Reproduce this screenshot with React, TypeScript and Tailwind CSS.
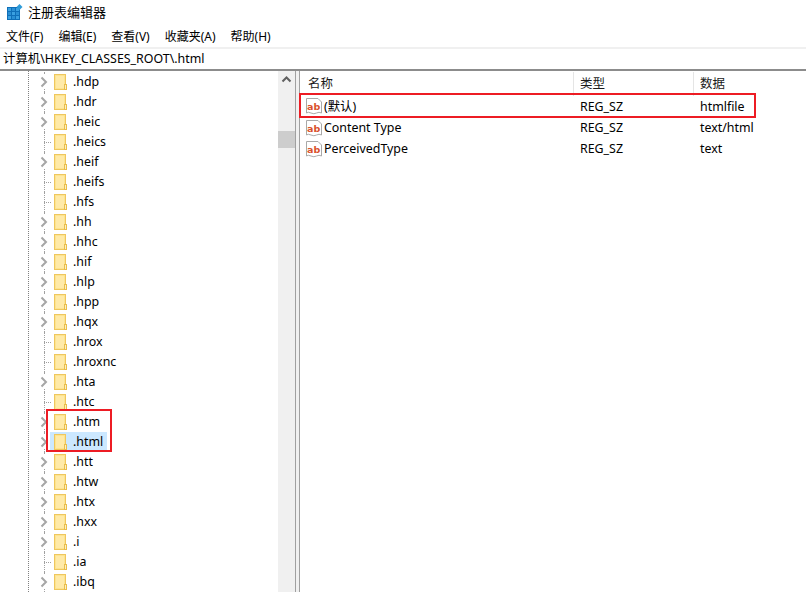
import React from 'react';

const keys: [string, boolean][] = [
  ['.hdp', true], ['.hdr', true], ['.heic', true], ['.heics', false], ['.heif', true],
  ['.heifs', false], ['.hfs', false], ['.hh', true], ['.hhc', true], ['.hif', true],
  ['.hlp', true], ['.hpp', true], ['.hqx', true], ['.hrox', false], ['.hroxnc', false],
  ['.hta', true], ['.htc', false], ['.htm', true], ['.html', true], ['.htt', true],
  ['.htw', true], ['.htx', true], ['.hxx', true], ['.i', true], ['.ia', false], ['.ibq', true],
];

const values = [
  { name: '(默认)', type: 'REG_SZ', data: 'htmlfile', h: 'h-[22px]' },
  { name: 'Content Type', type: 'REG_SZ', data: 'text/html', h: 'h-[21px]' },
  { name: 'PerceivedType', type: 'REG_SZ', data: 'text', h: 'h-[21px]' },
];

const menus = ['文件(F)', '编辑(E)', '查看(V)', '收藏夹(A)', '帮助(H)'];

function AppIcon() {
  return (
    <svg width="18" height="18" viewBox="0 0 18 18" className="shrink-0">
      <rect x="0" y="3" width="13" height="13" fill="#0f6fb8" />
      <rect x="1" y="4" width="3" height="3" fill="#3aa0e0" />
      <rect x="5" y="4" width="3" height="3" fill="#2a8fd4" />
      <rect x="9" y="4" width="3" height="3" fill="#3aa0e0" />
      <rect x="1" y="8" width="3" height="3" fill="#2a8fd4" />
      <rect x="5" y="8" width="3" height="3" fill="#3aa0e0" />
      <rect x="9" y="8" width="3" height="3" fill="#2a8fd4" />
      <rect x="1" y="12" width="3" height="3" fill="#3aa0e0" />
      <rect x="5" y="12" width="3" height="3" fill="#2a8fd4" />
      <rect x="9" y="12" width="3" height="3" fill="#3aa0e0" />
      <path d="M12.5 0 L15.5 3 L12.5 6 L9.5 3 Z" fill="#2f9bd8" />
    </svg>
  );
}

function Folder() {
  return (
    <svg width="13" height="17" viewBox="0 0 13 17" className="shrink-0">
      <rect x="0.5" y="0.5" width="11" height="15" fill="#fde48f" stroke="#efc75e" />
      <rect x="2" y="2" width="8" height="12" fill="#ffeaa8" />
      <rect x="10.5" y="10.5" width="2" height="5" fill="#fdf0bd" stroke="#e9bd4c" />
    </svg>
  );
}

function Chevron() {
  return (
    <svg width="8" height="12" viewBox="0 0 8 12" className="shrink-0">
      <path d="M1.5 1.5 L6 6 L1.5 10.5" fill="none" stroke="#a6a6a6" strokeWidth="2" />
    </svg>
  );
}

function AbIcon() {
  return (
    <svg width="16" height="17" viewBox="0 0 16 17" className="shrink-0">
      <path d="M0.5 0.5 H12 L15.5 4 V15 Q13 13.5 10.5 15 T5 15 T0.5 15 Z" fill="#fff" stroke="#a9a9a9" />
      <text x="1" y="11.5" fontSize="9.5" fontWeight="700" fill="#d9512c" fontFamily="'DejaVu Sans', sans-serif">ab</text>
    </svg>
  );
}

function TreeRow({ name, expandable }: { name: string; expandable: boolean }) {
  const selected = name === '.html';
  return (
    <div className="relative flex h-5 items-center pl-[40px]">
      {/* guide lines */}
      <div className="absolute left-[44px] top-0 h-full border-l border-dotted border-[#a0a0a0]" />
      {!expandable && <div className="absolute left-[44px] top-[10px] w-[7px] border-t border-dotted border-[#a0a0a0]" />}
      <div className="relative flex w-[10px] items-center">
        {expandable && <span className="flex bg-white py-[1px]"><Chevron /></span>}
      </div>
      <div className={`relative flex h-5 items-center pl-[4px] pr-[4px] ${selected ? 'bg-[#cce8ff]' : ''}`}>
        <Folder />
        <span className="ml-[6px] text-[12.4px] text-black">{name}</span>
      </div>
    </div>
  );
}

function ValueRow({ name, type, data, h }: { name: string; type: string; data: string; h: string }) {
  return (
    <div className={`flex items-center text-[12.4px] text-black ${h}`}>
      <div className="flex w-[274px] items-center gap-[2px] pl-[6px]">
        <AbIcon />
        <span>{name}</span>
      </div>
      <div className="w-[120px] pl-[6px]">{type}</div>
      <div className="pl-[6px]">{data}</div>
    </div>
  );
}

export default function App() {
  return (
    <div
      className="flex h-[592px] w-[806px] flex-col overflow-hidden bg-white"
      style={{ fontFamily: '"Noto Sans", "Noto Sans CJK SC", sans-serif' }}
    >
      <div className="flex h-[26px] shrink-0 items-center gap-[3px] pl-[7px] text-[13px] text-black">
        <AppIcon />
        <span>注册表编辑器</span>
      </div>
      <div className="flex h-[21px] shrink-0 items-center gap-[15px] pl-[6px] text-[12px] text-black">
        {menus.map((m) => (
          <span key={m}>{m}</span>
        ))}
      </div>
      <div className="h-[2px] shrink-0 bg-[#f0f0f0]" />
      <div className="flex h-[20px] shrink-0 items-center pl-[3px] text-[12.4px] text-black">计算机\HKEY_CLASSES_ROOT\.html</div>
      <div className="h-[2px] shrink-0 bg-[#8c8c8c]" />

      <div className="relative flex min-h-0 flex-1">
        <div className="relative w-[278px] shrink-0 overflow-hidden pt-px">
          <div className="absolute left-[28px] top-0 h-full border-l border-dotted border-[#808080]" />
          {keys.map(([name, exp]) => (
            <TreeRow key={name} name={name} expandable={exp} />
          ))}
        </div>

        <div className="flex w-[17px] shrink-0 flex-col items-center bg-[#f0f0f0]">
          <svg width="17" height="17" viewBox="0 0 17 17" className="shrink-0">
            <path d="M4.5 10.5 L8.5 6.5 L12.5 10.5" fill="none" stroke="#606060" strokeWidth="2" />
          </svg>
          <div className="mt-[43px] h-[17px] w-full bg-[#cdcdcd]" />
        </div>

        <div className="flex w-[5px] shrink-0">
          <div className="w-px bg-[#a0a0a0]" />
          <div className="flex-1 bg-[#f0f0f0]" />
          <div className="w-px bg-[#a0a0a0]" />
        </div>

        <div className="min-w-0 flex-1">
          <div className="flex h-[25px] items-center pt-px text-[12.5px] text-[#1a1a1a]">
            <div className="flex h-full w-[274px] items-center border-r border-[#e5e5e5] pl-[8px]">名称</div>
            <div className="flex h-full w-[120px] items-center border-r border-[#e5e5e5] pl-[6px]">类型</div>
            <div className="pl-[6px]">数据</div>
          </div>
          <div>
            {values.map((v) => (
              <ValueRow key={v.name} {...v} />
            ))}
          </div>
        </div>

        {/* red annotation boxes */}
        <div className="pointer-events-none absolute left-[46px] top-[338px] h-[43px] w-[66px] border-[2px] border-[#ed1c24]" />
        <div className="pointer-events-none absolute left-[299px] top-[22px] h-[25px] w-[457px] border-[2px] border-[#ed1c24]" />
      </div>
    </div>
  );
}
